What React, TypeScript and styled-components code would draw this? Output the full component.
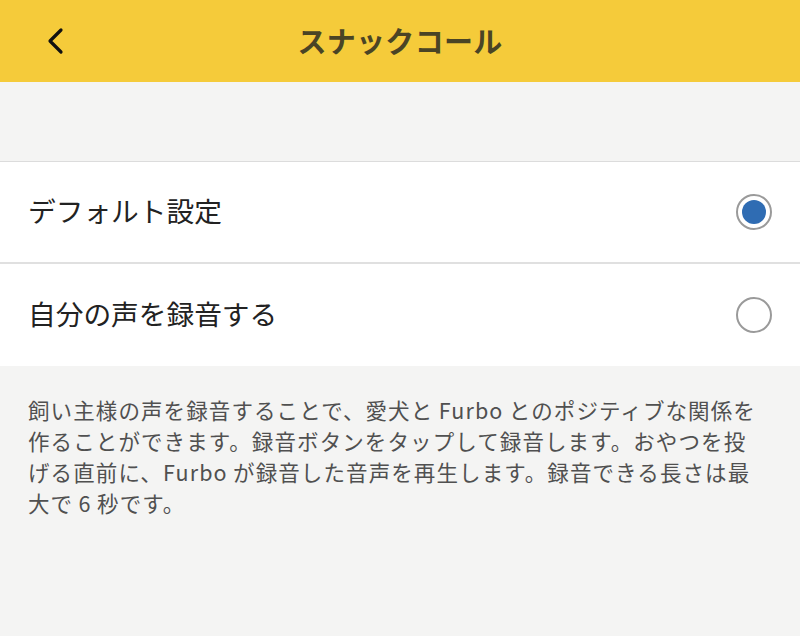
import React from "react";
import styled, { createGlobalStyle } from "styled-components";

const Global = createGlobalStyle`
  html, body { margin: 0; padding: 0; background: #f4f4f3; }
  body { font-family: "Noto Sans CJK JP", "Noto Sans", sans-serif; }
  #root { width: 800px; height: 636px; overflow: hidden; }
`;

const Page = styled.div`
  width: 800px;
  height: 636px;
  background: #f4f4f3;
  display: flex;
  flex-direction: column;
`;

const Header = styled.header`
  height: 82px;
  background: #f5cb3a;
  display: grid;
  grid-template-columns: 80px 1fr 80px;
  align-items: center;
`;

const BackButton = styled.button`
  border: none;
  background: transparent;
  padding: 0 0 0 44px;
  height: 82px;
  display: flex;
  align-items: center;
  justify-content: flex-start;
  cursor: pointer;
`;

const Title = styled.h1`
  margin: 0;
  text-align: center;
  font-size: 29px;
  font-weight: 700;
  color: #4a4425;
  letter-spacing: 0.3px;
  line-height: 1;
  padding-bottom: 2px;
`;

const Spacer = styled.div`
  height: 79px;
  border-bottom: 1px solid #dcdcdc;
`;

const List = styled.div`
  background: #ffffff;
  display: flex;
  flex-direction: column;
`;

const Row = styled.div<{ $last?: boolean }>`
  height: 102px;
  box-sizing: border-box;
  display: flex;
  align-items: center;
  justify-content: space-between;
  padding: 0 28px 0 28px;
  border-bottom: ${(p) => (p.$last ? "none" : "2px solid #e0e0e0")};
`;

const RowLabel = styled.span`
  font-size: 27.7px;
  color: #222;
  line-height: 1;
  padding-bottom: 2px;
`;

const Radio = styled.span<{ $checked?: boolean }>`
  width: 36px;
  height: 36px;
  box-sizing: border-box;
  border-radius: 50%;
  border: 2px solid #9a9a9a;
  display: flex;
  align-items: center;
  justify-content: center;
  background: #fff;
  &::after {
    content: "";
    width: 24px;
    height: 24px;
    border-radius: 50%;
    background: ${(p) => (p.$checked ? "#2f6cb3" : "transparent")};
  }
`;

const Description = styled.p`
  margin: 0;
  padding: 28px 28px 0 28px;
  font-size: 21.5px;
  line-height: 31px;
  color: #505050;
  letter-spacing: 1.1px;
  white-space: nowrap;
`;

export default function App() {
  return (
    <>
      <Global />
      <Page>
        <Header>
          <BackButton aria-label="戻る">
            <svg width="22" height="28" viewBox="0 0 22 28" fill="none">
              <path d="M17 3 L6 14 L17 25" stroke="#111" strokeWidth="3.2" strokeLinecap="round" strokeLinejoin="round" />
            </svg>
          </BackButton>
          <Title>スナックコール</Title>
          <div />
        </Header>
        <Spacer />
        <List>
          <Row>
            <RowLabel>デフォルト設定</RowLabel>
            <Radio $checked />
          </Row>
          <Row $last>
            <RowLabel>自分の声を録音する</RowLabel>
            <Radio />
          </Row>
        </List>
        <Description>
          飼い主様の声を録音することで、愛犬と{"\u2009"}Furbo{"\u2009"}とのポジティブな関係を
          <br />
          作ることができます。録音ボタンをタップして録音します。おやつを投
          <br />
          げる直前に、Furbo{"\u2009"}が録音した音声を再生します。録音できる長さは最
          <br />
          大で{"\u2009"}6{"\u2009"}秒です。
        </Description>
      </Page>
    </>
  );
}
